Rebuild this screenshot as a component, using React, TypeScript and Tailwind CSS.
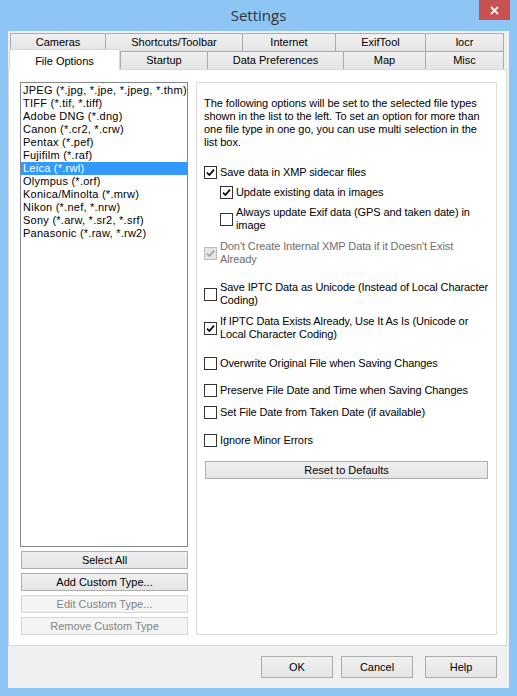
import React from 'react';

const fileTypes = [
  'JPEG (*.jpg, *.jpe, *.jpeg, *.thm)',
  'TIFF (*.tif, *.tiff)',
  'Adobe DNG (*.dng)',
  'Canon (*.cr2, *.crw)',
  'Pentax (*.pef)',
  'Fujifilm (*.raf)',
  'Leica (*.rwl)',
  'Olympus (*.orf)',
  'Konica/Minolta (*.mrw)',
  'Nikon (*.nef, *.nrw)',
  'Sony (*.arw, *.sr2, *.srf)',
  'Panasonic (*.raw, *.rw2)',
];

const CheckBox = ({ checked, disabled }: { checked?: boolean; disabled?: boolean }) => (
  <span
    className={`w-[13px] h-[13px] shrink-0 border flex items-center justify-center ${
      disabled ? 'border-[#bcbcbc] bg-[#e6e6e6]' : 'border-[#333333] bg-white'
    }`}
  >
    {checked && (
      <svg width="9" height="9" viewBox="0 0 9 9">
        <path
          d="M1 4.6 L3.4 7 L8 1.6"
          stroke={disabled ? '#a3a3a3' : '#000'}
          strokeWidth="1.7"
          fill="none"
        />
      </svg>
    )}
  </span>
);

const Option = ({
  label,
  checked,
  disabled,
  className = '',
}: {
  label: React.ReactNode;
  checked?: boolean;
  disabled?: boolean;
  className?: string;
}) => (
  <div className={`flex items-center gap-[3px] ${className}`}>
    <CheckBox checked={checked} disabled={disabled} />
    <span
      className={`leading-[13px] whitespace-nowrap tracking-[-0.1px] ${
        disabled ? 'text-[#6d6d6d]' : 'text-black'
      }`}
    >
      {label}
    </span>
  </div>
);

const Button = ({
  label,
  disabled,
  className = '',
}: {
  label: string;
  disabled?: boolean;
  className?: string;
}) => (
  <div
    className={`flex items-center justify-center border ${
      disabled
        ? 'border-[#d5d5d5] bg-[#f4f4f4] text-[#838383]'
        : 'border-[#acacac] bg-gradient-to-b from-[#f0f0f0] to-[#e5e5e5] text-black'
    } ${className}`}
  >
    {label}
  </div>
);

const Tab = ({ label, w, last }: { label: string; w: string; last?: boolean }) => (
  <div
    className={`${w} h-[18px] flex items-center justify-center border-t border-l border-[#acacac] bg-gradient-to-b from-[#f0f0f0] to-[#e5e5e5] ${
      last ? 'border-r' : ''
    }`}
  >
    {label}
  </div>
);

export default function App() {
  return (
    <div className="w-[517px] h-[696px] bg-[#8dc5f5] flex flex-col font-['Liberation_Sans',Arial,sans-serif] text-[11px] text-black select-none">
      {/* Title bar */}
      <div className="relative h-[31px] shrink-0 flex items-center justify-center">
        <span className="text-[15px] text-[#333] font-['Open_Sans','Noto_Sans',sans-serif] mt-[-1px]">Settings</span>
        <div className="absolute top-0 right-[7px] w-[31px] h-[20px] bg-[#c75050] flex items-center justify-center">
          <svg width="9" height="9" viewBox="0 0 9 9">
            <path d="M1 1 L8 8 M8 1 L1 8" stroke="#fff" strokeWidth="1.8" />
          </svg>
        </div>
      </div>

      {/* Client area */}
      <div className="mx-[8px] h-[657px] bg-[#f0f0f0] flex flex-col">
        {/* Tab rows */}
        <div className="mt-[2px] ml-[2px] flex">
          <Tab label="Cameras" w="w-[95px]" />
          <Tab label="Shortcuts/Toolbar" w="w-[137px]" />
          <Tab label="Internet" w="w-[93px]" />
          <Tab label="ExifTool" w="w-[90px]" />
          <Tab label="locr" w="w-[79px]" last />
        </div>
        <div className="ml-[1px] flex items-end h-[18px]">
          <div className="relative z-10 w-[111px] h-[21px] mb-[-1px] bg-white border-t border-l border-r border-[#d9d9d9] flex items-start justify-center pt-[3px]">
            File Options
          </div>
          <Tab label="Startup" w="w-[87px]" />
          <Tab label="Data Preferences" w="w-[136px]" />
          <Tab label="Map" w="w-[82px]" />
          <Tab label="Misc" w="w-[79px]" last />
        </div>

        {/* Tab panel */}
        <div className="w-[499px] h-[577px] bg-white border border-[#d9d9d9] flex gap-[8px] pl-[11px] pt-[12px]">
          {/* Left column */}
          <div className="w-[168px] flex flex-col">
            <div className="h-[465px] border border-[#828790] bg-white pt-[1px]">
              {fileTypes.map((t) => (
                <div
                  key={t}
                  className={`h-[13px] leading-[13px] pl-[2px] whitespace-nowrap tracking-[0.25px] ${
                    t === 'Leica (*.rwl)' ? 'bg-[#3399ff] text-white' : ''
                  }`}
                >
                  {t}
                </div>
              ))}
            </div>
            <Button label="Select All" className="mt-[4px] ml-[1px] h-[18px]" />
            <Button label="Add Custom Type..." className="mt-[4px] ml-[1px] h-[18px]" />
            <Button label="Edit Custom Type..." disabled className="mt-[4px] ml-[1px] h-[18px]" />
            <Button label="Remove Custom Type" disabled className="mt-[4px] ml-[1px] h-[18px]" />
          </div>

          {/* Options group */}
          <div className="w-[301px] h-[553px] border border-[#dcdcdc] pl-[7px] pt-[14px] flex flex-col">
            <p className="leading-[13px] whitespace-nowrap tracking-[-0.05px]">
              The following options will be set to the selected file types
              <br />
              shown in the list to the left. To set an option for more than
              <br />
              one file type in one go, you can use multi selection in the
              <br />
              list box.
            </p>
            <Option className="mt-[17px]" checked label="Save data in XMP sidecar files" />
            <Option className="mt-[7px] ml-[16px]" checked label="Update existing data in images" />
            <Option
              className="mt-[7px] ml-[16px]"
              label={
                <>
                  Always update Exif data (GPS and taken date) in
                  <br />
                  image
                </>
              }
            />
            <Option
              className="mt-[8px]"
              checked
              disabled
              label={
                <>
                  Don't Create Internal XMP Data if it Doesn't Exist
                  <br />
                  Already
                </>
              }
            />
            <Option
              className="mt-[15px]"
              label={
                <>
                  Save IPTC Data as Unicode (Instead of Local Character
                  <br />
                  Coding)
                </>
              }
            />
            <Option
              className="mt-[8px]"
              checked
              label={
                <>
                  If IPTC Data Exists Already, Use It As Is (Unicode or
                  <br />
                  Local Character Coding)
                </>
              }
            />
            <Option className="mt-[16px]" label="Overwrite Original File when Saving Changes" />
            <Option className="mt-[14px]" label="Preserve File Date and Time when Saving Changes" />
            <Option className="mt-[9px]" label="Set File Date from Taken Date (if available)" />
            <Option className="mt-[15px]" label="Ignore Minor Errors" />
            <Button label="Reset to Defaults" className="mt-[14px] ml-[1px] w-[283px] h-[18px]" />
          </div>
        </div>

        {/* Dialog buttons */}
        <div className="mt-[10px] ml-[253px] flex">
          <Button label="OK" className="w-[72px] h-[22px]" />
          <Button label="Cancel" className="ml-[8px] w-[72px] h-[22px]" />
          <Button label="Help" className="ml-[12px] w-[72px] h-[22px]" />
        </div>
      </div>
    </div>
  );
}
